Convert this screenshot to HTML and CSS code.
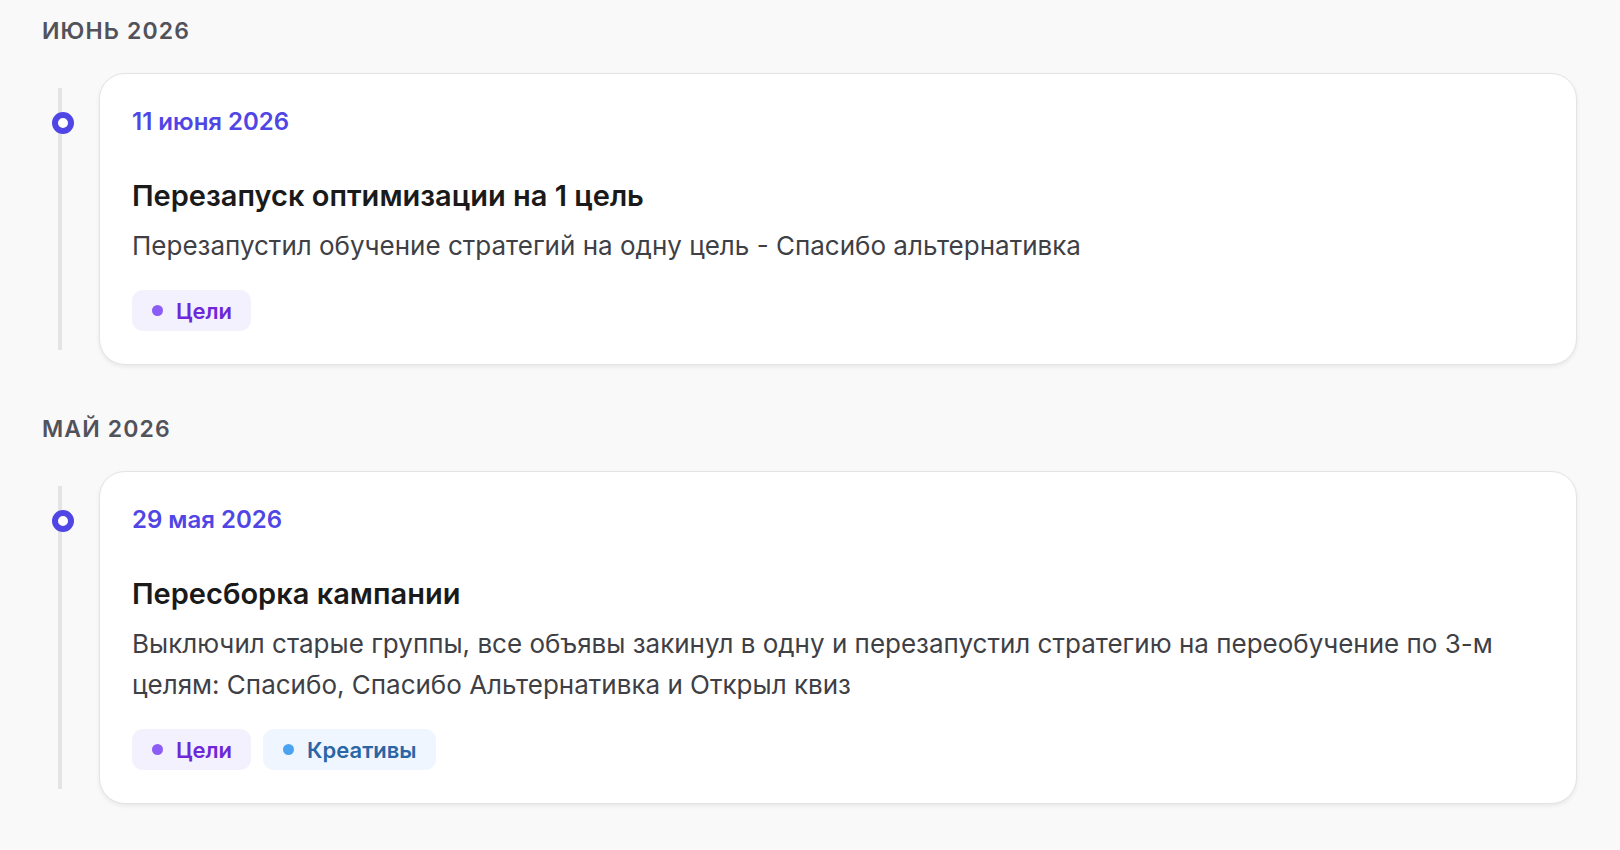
FILE: index.html
```html
<!DOCTYPE html>
<html lang="ru">
<head>
  <meta charset="UTF-8" />
  <meta name="viewport" content="width=device-width, initial-scale=1.0"/>
  <link rel="stylesheet" href="styles.css">
</head>
<body>
  <div class="journal">

    <section class="month">
      <h2 class="month-title">Июнь 2026</h2>
      <div class="entry">
        <div class="rail"><span class="dot"></span></div>
        <div class="card">
          <div class="card-date">11 июня 2026</div>
          <h3 class="card-title">Перезапуск оптимизации на 1 цель</h3>
          <p class="card-text">Перезапустил обучение стратегий на одну цель - Спасибо альтернативка</p>
          <div class="tags">
            <span class="tag tag-goals">Цели</span>
          </div>
        </div>
      </div>
    </section>

    <section class="month">
      <h2 class="month-title">Май 2026</h2>
      <div class="entry">
        <div class="rail"><span class="dot"></span></div>
        <div class="card">
          <div class="card-date">29 мая 2026</div>
          <h3 class="card-title">Пересборка кампании</h3>
          <p class="card-text">Выключил старые группы, все объявы закинул в одну и перезапустил стратегию на переобучение по 3-м целям: Спасибо, Спасибо Альтернативка и Открыл квиз</p>
          <div class="tags">
            <span class="tag tag-goals">Цели</span>
            <span class="tag tag-creatives">Креативы</span>
          </div>
        </div>
      </div>
    </section>

  </div>
</body>
</html>
```

FILE: styles.css
```css
body {
  margin: 0;
  background-color: #f9f9f9;
  font-family: Inter, "Noto Sans", sans-serif;
  color: #18181b;
}

.journal {
  padding: 16px 43px 40px 42px;
}

.month + .month {
  margin-top: 49px;
}

.month-title {
  margin: 0 0 27px;
  font-size: 23px;
  line-height: 30px;
  font-weight: 600;
  text-transform: uppercase;
  letter-spacing: 0.05em;
  color: #52525b;
}

.entry {
  display: flex;
}

/* vertical line + ring marker on the left */
.rail {
  position: relative;
  flex: 0 0 57px;
}
.rail::before {
  content: "";
  position: absolute;
  left: 16px;
  top: 15px;
  bottom: 15px;
  width: 4px;
  background-color: #e4e4e7;
}
.dot {
  position: absolute;
  left: 10px;
  top: 39px;
  width: 22px;
  height: 22px;
  box-sizing: border-box;
  border: 6px solid #4f46e5;
  border-radius: 50%;
  background-color: #fff;
}

.card {
  flex: 1;
  background-color: #fff;
  border: 1px solid #e4e4e7;
  border-radius: 26px;
  padding: 31px 32px 33px;
  box-shadow: 0 2px 4px rgba(0, 0, 0, 0.07);
}

.card-date {
  font-size: 24px;
  line-height: 33px;
  font-weight: 600;
  color: #4f46e5;
  margin-bottom: 40px;
}

.card-title {
  margin: 0 0 11px;
  font-size: 29px;
  line-height: 36px;
  font-weight: 600;
  color: #1a1a1a;
}

.card-text {
  margin: 0;
  font-size: 26px;
  line-height: 41px;
  color: #3f3f46;
}

.tags {
  display: flex;
  gap: 12px;
  margin-top: 24px;
}

.tag {
  display: inline-flex;
  align-items: center;
  gap: 13px;
  height: 41px;
  padding: 0 19px 0 20px;
  border-radius: 11px;
  font-size: 22px;
  font-weight: 600;
}
.tag::before {
  content: "";
  width: 11px;
  height: 11px;
  border-radius: 50%;
}

.tag-goals {
  background-color: #f4f1fe;
  color: #6d28d9;
}
.tag-goals::before {
  background-color: #8b5cf6;
}

.tag-creatives {
  background-color: #eff6ff;
  color: #2a65a6;
}
.tag-creatives::before {
  background-color: #4aa3f0;
}
```
